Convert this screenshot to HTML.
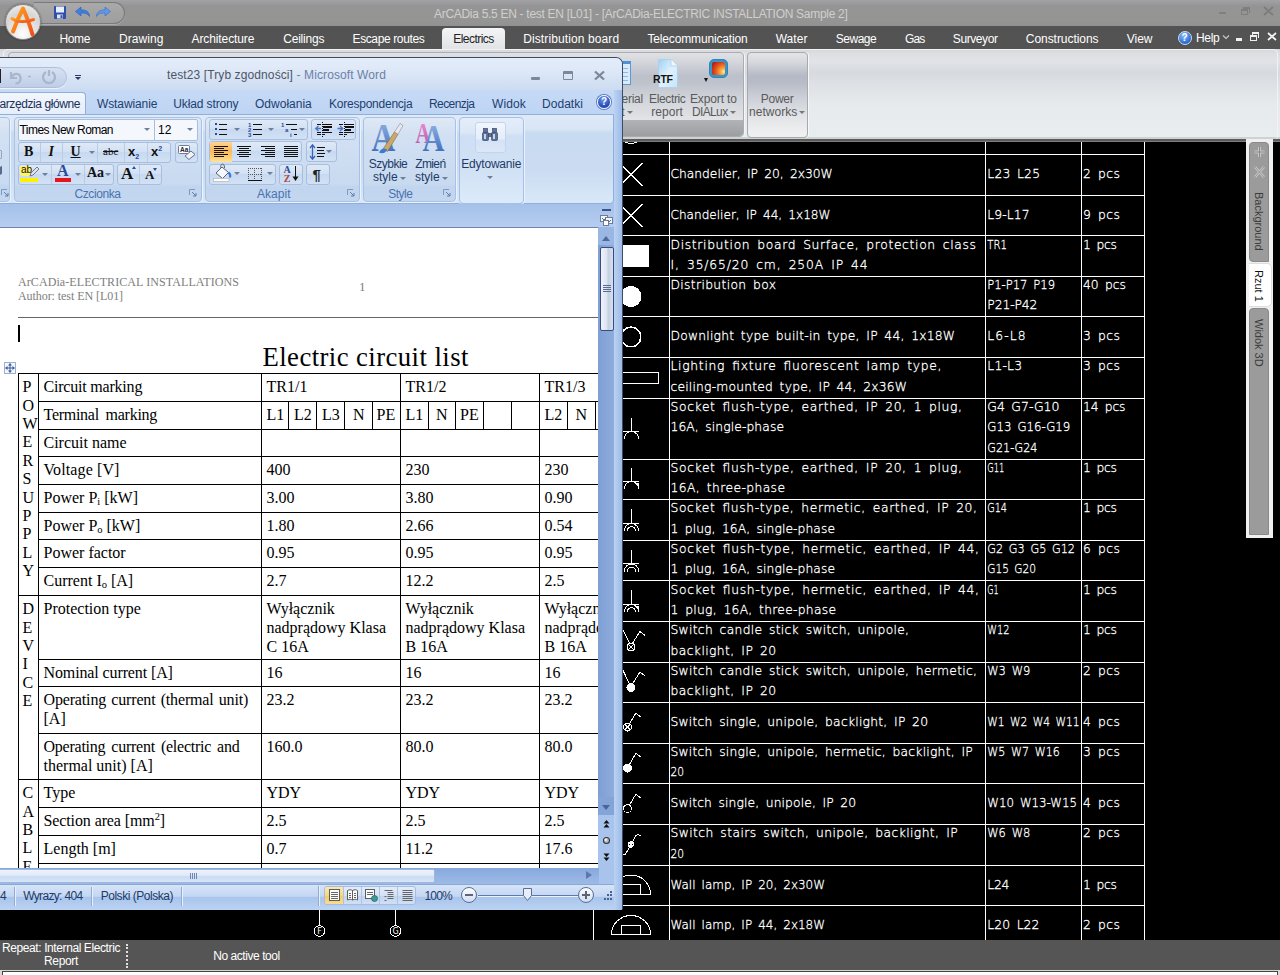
<!DOCTYPE html>
<html><head><meta charset="utf-8"><title>ArCADia</title>
<style>
*{box-sizing:border-box;margin:0;padding:0}
html,body{width:1280px;height:975px;overflow:hidden;background:#000}
body{position:relative;font-family:"Liberation Sans",sans-serif;font-size:12px}
.abs{position:absolute}
.t{position:absolute;white-space:nowrap}
/* ArCADia chrome */
#atitle{left:0;top:0;width:1280px;height:26px;background:linear-gradient(#a2a2a7 0,#9b9b9e 3px,#949494 6px,#959594 20px,#929292)}
#atitletxt{left:434px;top:7px;color:#cfcfcf;font-size:12px}
#qat{left:34px;top:2px;width:91px;height:22px;border-radius:0 11px 11px 0/0 11px 11px 0;background:linear-gradient(#a9a9a9,#9e9e9e);border:1px solid #7a7a7a;border-left:0;box-shadow:0 1px 0 #adadad}
#amenu{left:0;top:26px;width:1280px;height:23px;background:#535353}
#amenu .t{color:#fff;top:6px;font-size:12px}
#eltab{left:442px;top:2px;width:63px;height:22px;border-radius:4px 4px 0 0;background:linear-gradient(#f4f5f6,#dfe2e6)}
#helpico{left:1177.500px;top:5px;width:14px;height:14px;border-radius:50%;background:radial-gradient(circle at 40% 30%,#8cc0f8,#2a68d0 70%);border:1px solid #c8dcf4;color:#fff;font-size:10px;font-weight:bold;text-align:center;line-height:12px}
#aribbon{left:0;top:49px;width:1280px;height:93px;background:linear-gradient(#d4d6da 0,#dcdee2 4px,#e1e3e7 12px,#d6d9de 24px,#dde0e4 34px,#e6eaec 55px,#e8edef 88px,#cfd2d2 88px,#cfd2d2 90px,#565857 90px,#5f5f5f 92px,#7c7c7c 92px,#7c7c7c 93px)}
#rpanel{left:3px;top:0;width:1275px;height:90px;border:1px solid #f2f2f2;border-radius:5px 5px 3px 3px;border-bottom:0}
#grp1{left:8px;top:3px;width:736px;height:85px;border-radius:4px;border:1px solid #a9acb1;background:linear-gradient(#dfe1e5 0,#d4d6db 9px,#bcc0ca 23px,#bfc3cc 30px,#d0d3d9 45px,#dfe1e4 64px,#e4e6e8 70px);box-shadow:1px 0 0 #f4f4f4}
#grp1lab{left:0;bottom:0;width:100%;height:16px;background:linear-gradient(#b1b3b6,#9c9ea1);border-radius:0 0 4px 4px}
#grp2{left:747px;top:3px;width:61px;height:86px;border-radius:4px;border:1px solid #a6a9ae;background:linear-gradient(#e3e5e8 0,#d6d8dd 9px,#b5b9c5 23px,#b8bcc7 30px,#cdd0d8 45px,#e2e4e7 64px,#eef0f0 80px);box-shadow:1px 0 0 #f8f8f8}
.rl{color:#5a5a5a;font-size:12px}
#appbtn{left:5px;top:4px;width:36px;height:36px;border-radius:50%;background:radial-gradient(circle at 50% 85%,#fff 0,#e9e9e9 30%,#d6d6d6 60%,#f4f4f4 100%);border:1px solid #8a8a8a;box-shadow:0 0 2px rgba(0,0,0,.5)}
#astatus{left:0;top:940px;width:1280px;height:30px;background:#555}
#abottom{left:0;top:970px;width:1280px;height:5px;background:#d8d8d8}
/* right side panel */
#side{left:1246px;top:139px;width:27px;height:399px;background:#f0f0f0}
#side .tab{position:absolute;left:3px;width:20px;background:#9b9b9b;border:1px solid #8a8a8a}
#side .vt{position:absolute;white-space:nowrap;transform-origin:0 0;transform:rotate(90deg);font-size:11px;color:#333}
/* Word window */
#word{left:-20px;top:57px;width:643px;height:853px;background:#aac6ee;border:1px solid #3d4b66;border-bottom:0;border-radius:0 7px 2px 0;overflow:hidden}
#wi{left:19px;top:-58px;width:640px;height:975px}
#wtitle{left:-20px;top:58px;width:642px;height:32px;background:linear-gradient(#e4edfa,#dbe6f6 50%,#cddcf1)}
#wtitletxt{left:167px;top:68px;font-size:12px;color:#6b80a8}
#wqat{left:-20px;top:67px;width:87px;height:21px;border-radius:0 11px 11px 0;background:linear-gradient(#d6e1f2,#bfcee8);border:1px solid #aebfdc;box-shadow:0 1px 0 #eef3fb}
#wtabs{left:-20px;top:90px;width:642px;height:25px;background:linear-gradient(#c6daf6,#bdd4f3)}
#wtabs .t{top:8px;color:#1e3a68;font-size:12px}
#wtabact{left:-10px;top:92px;width:96px;height:24px;border:1px solid #8fb0dd;border-bottom:0;border-radius:4px 4px 0 0;background:linear-gradient(#f2f6fd,#e4edf9)}
#wrib{left:-20px;top:114px;width:634px;height:90px;border:1px solid #8fb0dd;border-radius:0 0 4px 4px;background:linear-gradient(#dfe9f7 0,#d8e5f5 14px,#c9dbf1 18px,#cbdcf2 55px,#d9e8f8 100%)}
.grp{position:absolute;top:117px;height:85px;border:1px solid #a9c1e2;border-radius:4px;background:linear-gradient(#dfe9f6,#d2e0f3 18px,#c8daf0 66px,#c1d5ee 69px,#c4d7f0);box-shadow:1px 0 0 #ecf2fb,0 1px 0 #ecf2fb}
.glab{position:absolute;top:187px;font-size:12px;color:#4a72b0;white-space:nowrap}
.bx{position:absolute;height:21px;border:1px solid #a8bedd;border-radius:3px;background:linear-gradient(#dfe9f7,#d3e1f4 45%,#c7d9f1 50%,#d2e1f5)}
.dd{position:absolute;width:0;height:0;border:3px solid transparent;border-top:3.500px solid #6d7f99;border-bottom:0}
.ln{position:absolute;background:#000;height:2px}
#wbelow{left:-20px;top:204px;width:642px;height:23px;background:linear-gradient(#a6c1ea,#b4cdf0)}
#docpage{left:0;top:227px;width:598px;height:641px;background:#fff;border-top:1px solid #6f82a8}
.hd{font-family:"Liberation Serif",serif;font-size:12px;color:#7e7e7e}
#doctitle{left:262.500px;top:342px;font-family:"Liberation Serif",serif;font-size:26.700px;color:#000;line-height:30px}
.dt{font-family:"Liberation Serif",serif;font-size:16px;line-height:18.700px;color:#000}
.dt sub{font-size:10.500px;vertical-align:baseline;position:relative;top:2px;line-height:0}
.dt sup{font-size:10.500px;vertical-align:baseline;position:relative;top:-6px;line-height:0}
#vsb{left:598px;top:227px;width:16px;height:641px;background:linear-gradient(90deg,#7f9fd3,#86a6d9 50%,#8eacdc)}
#hsb{left:-20px;top:868px;width:619px;height:16px;background:linear-gradient(#86a7dc,#93b2e2 50%,#9dbae6)}
#wstat{left:-20px;top:884px;width:642px;height:26px;background:linear-gradient(#d6e4f7 0,#c3d7f3 45%,#a9c5ec 50%,#bcd3f2 100%);border-top:1px solid #8ba9d6}
#wstat .t{top:5px;color:#1f3a68;font-size:12px}
#wframe{left:614px;top:90px;width:8px;height:820px;background:linear-gradient(90deg,#bcd2f2,#a9c4ec 60%,#9dbbe6)}
.rb{font-size:12px;color:#1e3a68}
.wt{color:#21406f}
.ws{color:#1f3a68;font-size:12px}
</style></head><body>
<svg class="abs" id="cadsvg" style="left:0;top:141px" width="1280" height="799" viewBox="0 141 1280 799">
<g fill="#fff" shape-rendering="crispEdges">
<rect x="593" y="141" width="1" height="799"/>
<rect x="669" y="141" width="1" height="799"/>
<rect x="985" y="141" width="1" height="799"/>
<rect x="1081" y="141" width="1" height="799"/>
<rect x="1144" y="141" width="1" height="799"/>
<rect x="593" y="154" width="552" height="1"/>
<rect x="593" y="195" width="552" height="1"/>
<rect x="593" y="235" width="552" height="1"/>
<rect x="593" y="276" width="552" height="1"/>
<rect x="593" y="316" width="552" height="1"/>
<rect x="593" y="357" width="552" height="1"/>
<rect x="593" y="398" width="552" height="1"/>
<rect x="593" y="459" width="552" height="1"/>
<rect x="593" y="499" width="552" height="1"/>
<rect x="593" y="540" width="552" height="1"/>
<rect x="593" y="580" width="552" height="1"/>
<rect x="593" y="621" width="552" height="1"/>
<rect x="593" y="662" width="552" height="1"/>
<rect x="593" y="702" width="552" height="1"/>
<rect x="593" y="743" width="552" height="1"/>
<rect x="593" y="783" width="552" height="1"/>
<rect x="593" y="824" width="552" height="1"/>
<rect x="593" y="865" width="552" height="1"/>
<rect x="593" y="905" width="552" height="1"/>
</g>
<g fill="#fff" stroke="#fff" stroke-width=".3" font-family="'DejaVu Sans Light','DejaVu Sans',sans-serif" font-weight="200" font-size="12.3" style="white-space:pre;word-spacing:2.4px">
<text x="670.5" y="178.0" textLength="162.2" lengthAdjust="spacing">Chandelier, IP 20, 2x30W</text>
<text x="987.3" y="178.0" textLength="52.7" lengthAdjust="spacing">L23 L25</text>
<text x="1083" y="178.0" textLength="37.0" lengthAdjust="spacing">2 pcs</text>
<text x="670.5" y="218.6" textLength="160.0" lengthAdjust="spacingAndGlyphs">Chandelier, IP 44, 1x18W</text>
<text x="987.3" y="218.6" textLength="42.2" lengthAdjust="spacing">L9-L17</text>
<text x="1083" y="218.6" textLength="37.0" lengthAdjust="spacing">9 pcs</text>
<text x="670.5" y="248.5" textLength="305.5" lengthAdjust="spacing">Distribution board Surface, protection class</text>
<text x="670.5" y="268.8" textLength="197.1" lengthAdjust="spacing">I, 35/65/20 cm, 250A IP 44</text>
<text x="987.3" y="248.5" textLength="19.7" lengthAdjust="spacingAndGlyphs">TR1</text>
<text x="1083" y="248.5" textLength="34.0" lengthAdjust="spacing">1 pcs</text>
<text x="670.5" y="289.1" textLength="105.5" lengthAdjust="spacing">Distribution box</text>
<text x="987.3" y="289.1" textLength="67.7" lengthAdjust="spacingAndGlyphs">P1-P17 P19</text>
<text x="987.3" y="309.4" textLength="50.1" lengthAdjust="spacing">P21-P42</text>
<text x="1083" y="289.1" textLength="43.0" lengthAdjust="spacing">40 pcs</text>
<text x="670.5" y="340.4" textLength="284.5" lengthAdjust="spacing">Downlight type built-in type, IP 44, 1x18W</text>
<text x="987.3" y="340.4" textLength="38.3" lengthAdjust="spacing">L6-L8</text>
<text x="1083" y="340.4" textLength="37.0" lengthAdjust="spacing">3 pcs</text>
<text x="670.5" y="370.3" textLength="271.0" lengthAdjust="spacing">Lighting fixture fluorescent lamp type,</text>
<text x="670.5" y="390.6" textLength="236.5" lengthAdjust="spacing">ceiling-mounted type, IP 44, 2x36W</text>
<text x="987.3" y="370.3" textLength="34.7" lengthAdjust="spacing">L1-L3</text>
<text x="1083" y="370.3" textLength="37.0" lengthAdjust="spacing">3 pcs</text>
<text x="670.5" y="410.9" textLength="291.5" lengthAdjust="spacing">Socket flush-type, earthed, IP 20, 1 plug,</text>
<text x="670.5" y="431.2" textLength="113.5" lengthAdjust="spacing">16A, single-phase</text>
<text x="987.3" y="410.9" textLength="72.2" lengthAdjust="spacingAndGlyphs">G4  G7-G10</text>
<text x="987.3" y="431.2" textLength="83.0" lengthAdjust="spacingAndGlyphs">G13  G16-G19</text>
<text x="987.3" y="451.5" textLength="50.1" lengthAdjust="spacingAndGlyphs">G21-G24</text>
<text x="1083" y="410.9" textLength="42.5" lengthAdjust="spacing">14 pcs</text>
<text x="670.5" y="471.8" textLength="291.5" lengthAdjust="spacing">Socket flush-type, earthed, IP 20, 1 plug,</text>
<text x="670.5" y="492.1" textLength="114.5" lengthAdjust="spacing">16A, three-phase</text>
<text x="987.3" y="471.8" textLength="17.1" lengthAdjust="spacingAndGlyphs">G11</text>
<text x="1083" y="471.8" textLength="34.0" lengthAdjust="spacing">1 pcs</text>
<text x="670.5" y="512.4" textLength="306.5" lengthAdjust="spacing">Socket flush-type, hermetic, earthed, IP 20,</text>
<text x="670.5" y="532.7" textLength="164.5" lengthAdjust="spacing">1 plug, 16A, single-phase</text>
<text x="987.3" y="512.4" textLength="19.7" lengthAdjust="spacingAndGlyphs">G14</text>
<text x="1083" y="512.4" textLength="34.0" lengthAdjust="spacing">1 pcs</text>
<text x="670.5" y="553.0" textLength="308.5" lengthAdjust="spacing">Socket flush-type, hermetic, earthed, IP 44,</text>
<text x="670.5" y="573.3" textLength="164.5" lengthAdjust="spacing">1 plug, 16A, single-phase</text>
<text x="987.3" y="553.0" textLength="87.7" lengthAdjust="spacingAndGlyphs">G2 G3 G5 G12</text>
<text x="987.3" y="573.3" textLength="48.7" lengthAdjust="spacingAndGlyphs">G15 G20</text>
<text x="1083" y="553.0" textLength="37.0" lengthAdjust="spacing">6 pcs</text>
<text x="670.5" y="593.6" textLength="308.5" lengthAdjust="spacing">Socket flush-type, hermetic, earthed, IP 44,</text>
<text x="670.5" y="613.9" textLength="165.5" lengthAdjust="spacing">1 plug, 16A, three-phase</text>
<text x="987.3" y="593.6" textLength="11.4" lengthAdjust="spacingAndGlyphs">G1</text>
<text x="1083" y="593.6" textLength="34.0" lengthAdjust="spacing">1 pcs</text>
<text x="670.5" y="634.2" textLength="238.5" lengthAdjust="spacing">Switch candle stick switch, unipole,</text>
<text x="670.5" y="654.5" textLength="105.5" lengthAdjust="spacing">backlight, IP 20</text>
<text x="987.3" y="634.2" textLength="22.2" lengthAdjust="spacingAndGlyphs">W12</text>
<text x="1083" y="634.2" textLength="34.0" lengthAdjust="spacing">1 pcs</text>
<text x="670.5" y="674.8" textLength="306.5" lengthAdjust="spacing">Switch candle stick switch, unipole, hermetic,</text>
<text x="670.5" y="695.1" textLength="105.5" lengthAdjust="spacing">backlight, IP 20</text>
<text x="987.3" y="674.8" textLength="43.1" lengthAdjust="spacingAndGlyphs">W3 W9</text>
<text x="1083" y="674.8" textLength="37.0" lengthAdjust="spacing">2 pcs</text>
<text x="670.5" y="726.1" textLength="257.5" lengthAdjust="spacing">Switch single, unipole, backlight, IP 20</text>
<text x="987.3" y="726.1" textLength="92.2" lengthAdjust="spacingAndGlyphs">W1 W2 W4 W11</text>
<text x="1083" y="726.1" textLength="37.0" lengthAdjust="spacing">4 pcs</text>
<text x="670.5" y="756.0" textLength="302.2" lengthAdjust="spacing">Switch single, unipole, hermetic, backlight, IP</text>
<text x="670.5" y="776.3" textLength="13.5" lengthAdjust="spacingAndGlyphs">20</text>
<text x="987.3" y="756.0" textLength="72.5" lengthAdjust="spacingAndGlyphs">W5 W7 W16</text>
<text x="1083" y="756.0" textLength="37.0" lengthAdjust="spacing">3 pcs</text>
<text x="670.5" y="807.3" textLength="185.5" lengthAdjust="spacing">Switch single, unipole, IP 20</text>
<text x="987.3" y="807.3" textLength="89.7" lengthAdjust="spacingAndGlyphs">W10  W13-W15</text>
<text x="1083" y="807.3" textLength="37.0" lengthAdjust="spacing">4 pcs</text>
<text x="670.5" y="837.2" textLength="287.1" lengthAdjust="spacing">Switch stairs switch, unipole, backlight, IP</text>
<text x="670.5" y="857.5" textLength="13.5" lengthAdjust="spacingAndGlyphs">20</text>
<text x="987.3" y="837.2" textLength="43.1" lengthAdjust="spacingAndGlyphs">W6 W8</text>
<text x="1083" y="837.2" textLength="37.0" lengthAdjust="spacing">2 pcs</text>
<text x="670.5" y="888.5" textLength="154.5" lengthAdjust="spacingAndGlyphs">Wall lamp, IP 20, 2x30W</text>
<text x="987.3" y="888.5" textLength="22.1" lengthAdjust="spacing">L24</text>
<text x="1083" y="888.5" textLength="34.0" lengthAdjust="spacing">1 pcs</text>
<text x="670.5" y="929.1" textLength="154.5" lengthAdjust="spacingAndGlyphs">Wall lamp, IP 44, 2x18W</text>
<text x="987.3" y="929.1" textLength="52.1" lengthAdjust="spacing">L20 L22</text>
<text x="1083" y="929.1" textLength="37.0" lengthAdjust="spacing">2 pcs</text>
</g>
<g stroke="#fff" stroke-width="1" fill="none" stroke-linecap="square" shape-rendering="crispEdges">
<!-- hidden row remnant -->
<path d="M624 141.5 q7 4 14 0"/>
<!-- chandeliers -->
<path d="M620 163.5 L642 185.5 M642 163.5 L620 185.5"/>
<path d="M620 204.5 L642 226.5 M642 204.5 L620 226.5"/>
<!-- distribution board / box -->
<rect x="612" y="245" width="37" height="22" fill="#fff" stroke="none"/>
<circle cx="631" cy="296.5" r="10.5" fill="#fff" stroke="none"/>
<circle cx="631" cy="337" r="9.8" stroke-width="1.6"/>
<rect x="604" y="372.5" width="54" height="11" shape-rendering="crispEdges"/>
<!-- sockets -->
<g id="sock1"><path d="M631.5 418 V431 M623.5 431.5 H638.5 M624.5 438.5 a7 7 0 0 1 14 0"/></g>
<g><path d="M631.5 468 V481 M623.5 481.5 H638.5 M624.5 488.5 a7 7 0 0 1 14 0 M636 483 l2.500 4 v-4z" /></g>
<g><path d="M631.5 509.500 V523 M623.500 523.500 H638.500 M624.500 530.500 a7 7 0 0 1 14 0 M627.500 530.500 a4 4 0 0 1 8 0"/></g>
<g><path d="M631.5 550 V563 M623.500 563.500 H638.500 M624.500 571 a7 7 0 0 1 14 0 M627.500 571 a4 4 0 0 1 8 0"/></g>
<g><path d="M631.5 590.500 V604 M623.500 604.500 H638.500 M624.500 611.500 a7 7 0 0 1 14 0 M627.500 611.500 a4 4 0 0 1 8 0 M636 606 l2.500 4 v-4z"/></g>
<!-- candle stick switches -->
<g><circle cx="631" cy="647" r="4"/><path d="M628.200 644.200 l5.600 5.600 M633.800 644.200 l-5.600 5.600 M629.500 643.300 L623 630 M632.500 643.300 L640 631.500 L644.500 635"/></g>
<g><circle cx="631" cy="687.500" r="4" fill="#fff"/><path d="M629.500 683.800 L623 670.500 M632.500 683.800 L640 672 L644.500 675.500"/></g>
<!-- single switches -->
<g><circle cx="627.500" cy="727" r="4"/><path d="M624.700 724.200 l5.600 5.600 M630.300 724.200 l-5.600 5.600 M629.500 723.500 L636 713 L640 716.500"/></g>
<g><circle cx="627.500" cy="768" r="4" fill="#fff"/><path d="M629.500 764.500 L636 753 L640 756.500"/></g>
<g><circle cx="627.500" cy="808.500" r="4"/><path d="M629.500 805 L636 794 L640 797.500"/></g>
<!-- stairs switch -->
<g><circle cx="631" cy="844.500" r="2.600"/><path d="M629.200 842.700 l3.600 3.600 M632.800 842.700 l-3.600 3.600 M623.300 854 l1.700 1 L636 835.500 L638 834.300 L640.300 835.800"/></g>
<!-- wall lamps -->
<path d="M611.500 894.500 a19.500 19.500 0 0 1 39 0 z M621.500 894.500 v-10 h19 v10"/>
<path d="M611.500 934.500 a19.500 19 0 0 1 39 0 z M621.500 934.500 v-9 h19 v9"/>
<!-- axis markers -->
<path d="M319.500 905 V925 M395.500 905 V925"/>
<circle cx="319.500" cy="931" r="5.300"/><circle cx="395.500" cy="931" r="5.300"/>
</g>
<g fill="#fff" font-family="'DejaVu Sans',sans-serif" font-size="8" text-anchor="middle"><text x="319.600" y="934">F</text><text x="395.500" y="934">G</text></g>
</svg>
<div class="abs" id="atitle">
 <div class="t" id="atitletxt" style="letter-spacing:-0.295px">ArCADia 5.5 EN - test EN [L01] - [ArCADia-ELECTRIC INSTALLATION Sample 2]</div>
 <div class="abs" id="qat"></div>
 <svg class="abs" style="left:52px;top:4px" width="64" height="18" viewBox="0 0 64 18">
  <rect x="2" y="2" width="12" height="13" rx="1" fill="#2f4fa8"/><rect x="4" y="2.500" width="8" height="6" fill="#e8eefc"/><rect x="5" y="10.500" width="6" height="4" fill="#dfe6f6"/><rect x="8.500" y="11.200" width="2" height="2.800" fill="#2f4fa8"/>
  <path d="M23.500 7.500 l5.500 -4.500 v3 c5 -0.500 8.500 2 8.500 6.500 c-1.500 -3 -4.500 -3.800 -8.500 -3.500 v3z" fill="#3f7fe0" stroke="#2a5cb8" stroke-width=".6"/>
  <path d="M58.500 7.500 l-5.500 -4.500 v3 c-5 -0.500 -8.500 2 -8.500 6.500 c1.500 -3 4.500 -3.800 8.500 -3.500 v3z" fill="#5f98e8" stroke="#3a6cc8" stroke-width=".6"/>
 </svg>
 <div class="abs" style="left:1219px;top:12px;width:7px;height:2px;background:#808080"></div>
 <div class="abs" style="left:1241px;top:9px;width:7px;height:6px;border:1px solid #7e7e7e;border-top-width:2px"></div>
 <div class="abs" style="left:1243px;top:7px;width:7px;height:6px;border:1px solid #7e7e7e;border-top-width:2px;border-left:0;border-bottom:0"></div>
 <div class="abs" style="left:1243px;top:7px;width:1px;height:2px;background:#7e7e7e"></div>
 <svg class="abs" style="left:1263px;top:6px" width="11" height="10" viewBox="0 0 11 10"><path d="M1 1 L10 9 M10 1 L1 9" stroke="#7c7c7c" stroke-width="1.800"/></svg>
</div>
<div class="abs" id="amenu">
 <div class="abs" id="eltab"></div>
 <div class="t" style="left:59.5px;letter-spacing:-0.379px">Home</div>
 <div class="t" style="left:119.0px;letter-spacing:0.069px">Drawing</div>
 <div class="t" style="left:191.5px;letter-spacing:-0.103px">Architecture</div>
 <div class="t" style="left:283.2px;letter-spacing:-0.198px">Ceilings</div>
 <div class="t" style="left:352.5px;letter-spacing:-0.378px">Escape routes</div>
 <div class="t" style="left:453.2px;color:#222;letter-spacing:-0.527px">Electrics</div>
 <div class="t" style="left:523.2px;letter-spacing:0.113px">Distribution board</div>
 <div class="t" style="left:647.5px;letter-spacing:-0.160px">Telecommunication</div>
 <div class="t" style="left:775.7px;letter-spacing:0.048px">Water</div>
 <div class="t" style="left:835.7px;letter-spacing:-0.462px">Sewage</div>
 <div class="t" style="left:905.0px;letter-spacing:-0.905px">Gas</div>
 <div class="t" style="left:952.8px;letter-spacing:-0.416px">Surveyor</div>
 <div class="t" style="left:1025.8px;letter-spacing:-0.052px">Constructions</div>
 <div class="t" style="left:1126.8px;letter-spacing:-0.024px">View</div>
 <div class="abs" id="helpico"><span>?</span></div>
 <div class="t" style="left:1196.0px;top:5px;letter-spacing:-0.297px">Help</div>
 <svg class="abs" style="left:1222px;top:8px" width="8" height="6" viewBox="0 0 8 6"><path d="M1 1.500 L4 4.500 L7 1.500" stroke="#ccc" stroke-width="1.100" fill="none"/></svg>
 <div class="abs" style="left:1236px;top:12px;width:6px;height:3px;background:#f0f0f0"></div>
 <div class="abs" style="left:1250px;top:9px;width:7px;height:6px;border:1px solid #f0f0f0;border-top-width:2px"></div>
 <div class="abs" style="left:1252px;top:6px;width:7px;height:6px;border:1px solid #f0f0f0;border-top-width:2px;border-left:0;border-bottom:0"></div>
 <div class="abs" style="left:1252px;top:6px;width:1px;height:3px;background:#f0f0f0"></div>
 <svg class="abs" style="left:1267px;top:6px" width="10" height="9" viewBox="0 0 10 9"><path d="M1 1 L9 8 M9 1 L1 8" stroke="#f4f4f4" stroke-width="1.700"/></svg>
</div>
<div class="abs" id="aribbon">
 <div class="abs" id="rpanel"></div>
 <div class="abs" id="grp1"><div class="abs" id="grp1lab"></div></div>
 <div class="abs" id="grp2"></div>
 <!-- group 1 content -->
 <div class="abs" style="left:620px;top:12px;width:11px;height:24px;background:#d9eafa;border:1px solid #5a9ad8;border-top:3px solid #4d90d4"></div>
 <div class="abs" style="left:622px;top:19px;width:6px;height:1px;background:#8dbbe6;box-shadow:0 4px #8dbbe6,0 8px #8dbbe6,0 12px #8dbbe6"></div><div class="t rl" style="left:610px;top:56px">list</div>
 <div class="t rl" style="left:621.5px;top:43px;letter-spacing:-0.237px">erial</div>
 <div class="abs" style="left:627px;top:62px;width:0;height:0;border:3px solid transparent;border-top:3.500px solid #777;border-bottom:0"></div>
 <svg class="abs" style="left:652px;top:9px" width="28" height="32" viewBox="0 0 28 32"><defs><linearGradient id="pg" x1="0" y1="0" x2="1" y2="1"><stop offset="0" stop-color="#9fd0f4"/><stop offset=".5" stop-color="#dff0fc"/><stop offset="1" stop-color="#c8e4f8"/></linearGradient></defs><path d="M6.500 1.500 H19 L25.500 8 V29.500 H6.500z" fill="url(#pg)" stroke="#a8cfee" stroke-width=".8"/><path d="M19 1.500 V8 H25.500" fill="#eef7fe" stroke="#a8cfee" stroke-width=".8"/></svg>
 <div class="t" style="left:653px;top:24px;font-size:10.500px;font-weight:bold;color:#111;letter-spacing:-0.207px">RTF</div>
 <div class="t rl" style="left:649.0px;top:43px;letter-spacing:-0.355px">Electric</div>
 <div class="t rl" style="left:651.2px;top:56px;letter-spacing:0.073px">report</div>
 <div class="abs" style="left:709px;top:10px;width:19px;height:19px;border-radius:5px;background:#3a94c8;border:1px solid #2c86bc"></div>
 <div class="abs" style="left:712px;top:13px;width:13px;height:13px;border-radius:2px;background:radial-gradient(circle at 90% 75%,#ffe9a8 0,#f9a838 22%,#e8501c 55%,#8c1810 100%)"></div>
 <div class="abs" style="left:704px;top:29px;width:0;height:0;border:2.500px solid transparent;border-top:4px solid #111;border-bottom:0"></div>
 <div class="t rl" style="left:690.0px;top:43px;letter-spacing:-0.137px">Export to</div>
 <div class="t rl" style="left:692px;top:56px;letter-spacing:-0.643px">DIALux</div><div class="abs" style="left:730px;top:62px;width:0;height:0;border:3px solid transparent;border-top:3.500px solid #777;border-bottom:0"></div>
 <div class="t rl" style="left:760.8px;top:43px;letter-spacing:-0.263px">Power</div>
 <div class="t rl" style="left:749px;top:56px;letter-spacing:0.034px">networks</div><div class="abs" style="left:799px;top:62px;width:0;height:0;border:3px solid transparent;border-top:3.500px solid #777;border-bottom:0"></div>
</div>
<div class="abs" id="appbtn"><svg width="36" height="36" viewBox="0 0 36 36"><defs><linearGradient id="ag" x1="0" y1="0" x2="1" y2="1"><stop offset="0" stop-color="#ffa51e"/><stop offset="1" stop-color="#f0501a"/></linearGradient></defs>
<path d="M7 26.500 C10 18 13.500 10 17 3.500 C20.500 11 24 21 26.500 29.500" fill="none" stroke="url(#ag)" stroke-width="4" stroke-linecap="round" stroke-linejoin="round"/><path d="M6 13.500 C12 17.500 20 17 27.500 14.500" fill="none" stroke="url(#ag)" stroke-width="3" stroke-linecap="round"/></svg></div>
<div class="abs" id="astatus">
 <div class="t" style="left:2.0px;top:1px;color:#fff;letter-spacing:-0.403px">Repeat: Internal Electric</div>
 <div class="t" style="left:44.0px;top:14px;color:#fff;letter-spacing:-0.339px">Report</div>
 <div class="abs" style="left:126px;top:4px;width:0;height:24px;border-left:2px dotted #e0e0e0"></div>
 <div class="t" style="left:213.2px;top:9px;color:#fff;letter-spacing:-0.436px">No active tool</div>
</div>
<div class="abs" id="abottom"><div class="abs" style="left:2px;top:1px;width:1276px;height:4px;background:#fff;border:1px solid #444;border-bottom:0"></div></div>
<div class="abs" id="side">
 <div class="tab" style="top:3px;height:120px;border-radius:4px 4px 0 4px"></div>
 <div class="tab" style="top:169px;height:227px;border-radius:4px 4px 0 0"></div>
 <div class="abs" style="left:3px;top:124px;width:23px;height:44px;background:#fff;border-radius:0 5px 5px 0;border:1px solid #ddd;border-left:0"></div>
 <svg class="abs" style="left:7px;top:7px" width="13" height="42" viewBox="0 0 13 42"><path d="M6.500 1 V11 M1.500 6 H11.500" stroke="#c9c9c9" stroke-width="3"/><path d="M6.500 1 V11 M1.500 6 H11.500" stroke="#888" stroke-width="1"/><path d="M2 21 L11 31 M11 21 L2 31" stroke="#c9c9c9" stroke-width="2.600"/><path d="M2 21 L11 31 M11 21 L2 31" stroke="#888" stroke-width=".8"/></svg>
 <div class="vt" style="left:19px;top:53px;color:#3c3c3c">Background</div>
 <div class="vt" style="left:19px;top:131px;color:#111">Rzut 1</div>
 <div class="vt" style="left:19px;top:180px;color:#3c3c3c">Widok 3D</div>
</div>
<div class="abs" id="word"><div class="abs" id="wi">
<div class="abs" id="wtitle"></div>
<div class="abs" id="wqat"></div>
<div class="abs" style="left:0;top:69px;width:1px;height:14px;background:#222"></div>
<svg class="abs" style="left:8px;top:68px" width="50" height="18" viewBox="0 0 50 18"><path d="M3 4 v6 h6 M3.500 9.500 c2 -5 9 -5 9 1 c0 3 -2 5 -5 5" fill="none" stroke="#a9b6cb" stroke-width="2.200"/><path d="M20 8.500 h3" stroke="#a9b6cb" stroke-width="1.500"/><path d="M38 4 a6 6 0 1 0 6 0 M41 2 v6" fill="none" stroke="#a9b6cb" stroke-width="2.300"/></svg>
<div class="abs" style="left:75px;top:75px;width:6px;height:1px;background:#2b3d63"></div>
<div class="dd" style="left:75px;top:77px;border-top-color:#2b3d63"></div>
<div class="t" id="wtitletxt" style="letter-spacing:0.106px"><span style="color:#4e5666">test23 [Tryb zgodności]</span> - Microsoft Word</div>
<div class="abs" style="left:531px;top:77px;width:9px;height:3px;background:#7c8798;border-radius:1px"></div>
<div class="abs" style="left:563px;top:71px;width:10px;height:9px;border:1.500px solid #7c8798;border-top-width:3px;border-radius:1px"></div>
<svg class="abs" style="left:593px;top:70px" width="13" height="11" viewBox="0 0 13 11"><path d="M2 1.500 L11 9.500 M11 1.500 L2 9.500" stroke="#7c8798" stroke-width="2.300"/></svg>
<div class="abs" id="wtabs"></div>
<div class="abs" id="wtabact"></div>
<div class="t wt" style="left:-9.5px;top:97px;color:#1a2f58;font-size:12px">N</div><div class="t wt" style="left:-0.5px;top:97px;color:#1a2f58;font-size:12px;letter-spacing:-0.415px">arzędzia główne</div>
<div class="t wt" style="left:97.0px;top:97px;letter-spacing:-0.106px">Wstawianie</div>
<div class="t wt" style="left:173.3px;top:97px;letter-spacing:-0.125px">Układ strony</div>
<div class="t wt" style="left:255.0px;top:97px;letter-spacing:0.011px">Odwołania</div>
<div class="t wt" style="left:329.0px;top:97px;letter-spacing:-0.231px">Korespondencja</div>
<div class="t wt" style="left:429.0px;top:97px;letter-spacing:-0.591px">Recenzja</div>
<div class="t wt" style="left:492.0px;top:97px;letter-spacing:0.131px">Widok</div>
<div class="t wt" style="left:542.0px;top:97px;letter-spacing:0.045px">Dodatki</div>
<div class="abs" style="left:597px;top:95px;width:14px;height:14px;border-radius:50%;background:radial-gradient(circle at 45% 30%,#6f9cf0,#1c3fae 75%);border:1px solid #eef3fc;box-shadow:0 0 0 1px #5c7ec0;color:#fff;font-weight:bold;font-size:10px;line-height:12px;text-align:center">?</div>
<div class="abs" id="wrib"></div>
<!-- groups -->
<div class="grp" style="left:-20px;width:30px"></div>
<div class="grp" style="left:14px;width:188px"></div>
<div class="grp" style="left:205px;width:155px"></div>
<div class="grp" style="left:363px;width:93px"></div>
<div class="grp" style="left:459px;width:65px;height:87px;background:linear-gradient(#e4edfa 0,#dde8f7 14px,#cfdff3 18px,#d2e2f5 55px,#dcebfa 100%);border-color:#a4c0e8"></div>
<div class="glab" style="left:74.5px;letter-spacing:-0.420px">Czcionka</div>
<div class="glab" style="left:257px;letter-spacing:0.023px">Akapit</div>
<div class="glab" style="left:388.3px;letter-spacing:-0.537px">Style</div>
<!-- dialog launchers -->
<svg class="abs" style="left:1px;top:189px" width="8" height="8" viewBox="0 0 8 8"><path d="M.500 6 V.500 H6" fill="none" stroke="#7f98bf"/><path d="M3 3 l4 4 M7 4 v3 h-3" fill="none" stroke="#5f7ba8"/></svg>
<svg class="abs" style="left:189px;top:189px" width="8" height="8" viewBox="0 0 8 8"><path d="M.500 6 V.500 H6" fill="none" stroke="#7f98bf"/><path d="M3 3 l4 4 M7 4 v3 h-3" fill="none" stroke="#5f7ba8"/></svg>
<svg class="abs" style="left:347px;top:189px" width="8" height="8" viewBox="0 0 8 8"><path d="M.500 6 V.500 H6" fill="none" stroke="#7f98bf"/><path d="M3 3 l4 4 M7 4 v3 h-3" fill="none" stroke="#5f7ba8"/></svg>
<svg class="abs" style="left:443px;top:189px" width="8" height="8" viewBox="0 0 8 8"><path d="M.500 6 V.500 H6" fill="none" stroke="#7f98bf"/><path d="M3 3 l4 4 M7 4 v3 h-3" fill="none" stroke="#5f7ba8"/></svg>
<div class="abs" style="left:-3px;top:150px;width:5px;height:9px;border:1px solid #9aa6ba;border-radius:1px"></div><div class="abs" style="left:-2px;top:167px;width:4px;height:8px;background:#5a6a8c;transform:skewY(-30deg)"></div>
<!-- Czcionka -->
<div class="bx" style="left:18px;top:119px;width:137px;height:22px;background:#f4f8fd;border-radius:2px 0 0 2px"></div>
<div class="bx" style="left:154px;top:119px;width:44px;height:22px;background:#f4f8fd;border-radius:0 2px 2px 0"></div>
<div class="t" style="left:19.5px;top:123px;font-size:12px;color:#000;letter-spacing:-0.539px">Times New Roman</div>
<div class="t" style="left:158px;top:123px;font-size:12px;color:#000">12</div>
<div class="dd" style="left:144px;top:128px"></div><div class="dd" style="left:187px;top:128px"></div>
<div class="bx" style="left:18px;top:142px;width:153px"></div>
<div class="bx" style="left:175px;top:142px;width:23px"></div>
<div class="abs" style="left:40px;top:143px;width:1px;height:19px;background:#b9cce6;box-shadow:22px 0 #b9cce6,57px 0 #b9cce6,84px 0 #b9cce6,107px 0 #b9cce6"></div>
<div class="t" style="left:24px;top:144px;font:bold 14px 'Liberation Serif',serif;color:#111">B</div>
<div class="t" style="left:48.500px;top:144px;font:italic bold 14px 'Liberation Serif',serif;color:#111">I</div>
<div class="t" style="left:70.500px;top:143.500px;font:bold 14px 'Liberation Serif',serif;color:#111;text-decoration:underline">U</div>
<div class="dd" style="left:89px;top:151px"></div>
<div class="t" style="left:103px;top:145px;font:11px 'Liberation Serif',serif;color:#111;text-decoration:line-through">abc</div>
<div class="t" style="left:128px;top:144px;font:bold 13px 'Liberation Sans',sans-serif;color:#111">x<span style="font-size:7px;color:#2a4a9a;position:relative;top:3px">2</span></div>
<div class="t" style="left:151px;top:144px;font:bold 13px 'Liberation Sans',sans-serif;color:#111">x<span style="font-size:7px;color:#2a4a9a;position:relative;top:-5px">2</span></div>
<svg class="abs" style="left:177px;top:144px" width="20" height="17" viewBox="0 0 20 17"><rect x="1.500" y="1.500" width="11" height="8" rx="1" fill="#fff" stroke="#6a7c98"/><text x="3" y="8" font-family="Liberation Sans,sans-serif" font-size="6.500" font-weight="bold" fill="#223">Aa</text><path d="M8 12 l6 -5 l4 3.500 l-6 5z" fill="#f2f2f6" stroke="#6a7088"/></svg>
<div class="bx" style="left:18px;top:164px;width:96px"></div>
<div class="bx" style="left:117px;top:164px;width:45px"></div>
<div class="abs" style="left:51px;top:165px;width:1px;height:19px;background:#b9cce6;box-shadow:33px 0 #b9cce6,88px 0 #b9cce6"></div>
<div class="abs" style="left:20px;top:166px;width:11px;height:10px;background:#fff36a;border-radius:2px"></div><div class="t" style="left:21px;top:164px;font:10px 'Liberation Sans',sans-serif;color:#111">ab</div>
<svg class="abs" style="left:28px;top:166px" width="12" height="12" viewBox="0 0 12 12"><path d="M2 10 l1 -3 l6 -6 l2 2 l-6 6z" fill="#dfe4ee" stroke="#55617a" stroke-width=".8"/></svg>
<div class="abs" style="left:20px;top:178px;width:18px;height:4px;background:#fff000"></div>
<div class="dd" style="left:42px;top:173px"></div>
<div class="t" style="left:57px;top:162px;font:bold 16px 'Liberation Serif',serif;color:#2a4a9a">A</div>
<div class="abs" style="left:55px;top:178px;width:16px;height:4px;background:#e8141c"></div>
<div class="dd" style="left:75px;top:173px"></div>
<div class="t" style="left:87px;top:165px;font:bold 14px 'Liberation Serif',serif;color:#111">Aa</div>
<div class="dd" style="left:105px;top:173px"></div>
<div class="t" style="left:121px;top:164px;font:bold 17px 'Liberation Serif',serif;color:#111">A</div>
<div class="t" style="left:145px;top:167px;font:bold 13px 'Liberation Serif',serif;color:#111">A</div>
<div class="abs" style="left:132px;top:166px;width:0;height:0;border:2.500px solid transparent;border-bottom:3px solid #2a4a9a;border-top:0"></div>
<div class="abs" style="left:153px;top:168px;width:0;height:0;border:2.500px solid transparent;border-top:3px solid #2a4a9a;border-bottom:0"></div>
<!-- Akapit -->
<div class="bx" style="left:209px;top:119px;width:99px"></div>
<div class="bx" style="left:311px;top:119px;width:45px"></div>
<div class="bx" style="left:209px;top:141px;width:93px"></div>
<div class="bx" style="left:306px;top:141px;width:31px"></div>
<div class="bx" style="left:209px;top:164px;width:67px"></div>
<div class="bx" style="left:279px;top:164px;width:24px"></div>
<div class="bx" style="left:306px;top:164px;width:24px"></div>
<div class="abs" style="left:210px;top:142px;width:22px;height:20px;background:linear-gradient(#fdd594,#fbb85a 45%,#fdd078 80%,#fde39a);border-radius:2px 0 0 2px"></div>
<svg class="abs" style="left:205px;top:115px" width="160" height="75" viewBox="205 115 160 75" shape-rendering="crispEdges"><g fill="#111"><rect x="219" y="124" width="8" height="1"/><rect x="219" y="129" width="8" height="1"/><rect x="219" y="134" width="8" height="1"/><rect x="253" y="124" width="9" height="1"/><rect x="253" y="129" width="9" height="1"/><rect x="253" y="134" width="9" height="1"/><rect x="286" y="124" width="11" height="1"/><rect x="291" y="129" width="6" height="1"/><rect x="294" y="134" width="3" height="1"/><rect x="214" y="146" width="14" height="1"/><rect x="237" y="146" width="14" height="1"/><rect x="261" y="146" width="14" height="1"/><rect x="284" y="146" width="14" height="1"/><rect x="214" y="148" width="10" height="1"/><rect x="239" y="148" width="10" height="1"/><rect x="265" y="148" width="10" height="1"/><rect x="284" y="148" width="14" height="1"/><rect x="214" y="150" width="14" height="1"/><rect x="237" y="150" width="14" height="1"/><rect x="261" y="150" width="14" height="1"/><rect x="284" y="150" width="14" height="1"/><rect x="214" y="152" width="10" height="1"/><rect x="239" y="152" width="10" height="1"/><rect x="265" y="152" width="10" height="1"/><rect x="284" y="152" width="14" height="1"/><rect x="214" y="154" width="14" height="1"/><rect x="237" y="154" width="14" height="1"/><rect x="261" y="154" width="14" height="1"/><rect x="284" y="154" width="14" height="1"/><rect x="214" y="156" width="10" height="1"/><rect x="239" y="156" width="10" height="1"/><rect x="265" y="156" width="10" height="1"/><rect x="284" y="156" width="14" height="1"/><rect x="317" y="147" width="8" height="1"/><rect x="317" y="150" width="7" height="1"/><rect x="317" y="153" width="8" height="1"/><rect x="317" y="156" width="7" height="1"/><rect x="317" y="124" width="4" height="1"/><rect x="323" y="124" width="9" height="1"/><rect x="323" y="126" width="9" height="2"/><rect x="323" y="129" width="6" height="2"/><rect x="317" y="132" width="4" height="1"/><rect x="323" y="132" width="9" height="1"/><rect x="317" y="134" width="4" height="1"/><rect x="323" y="134" width="2" height="1"/><rect x="322" y="122" width="1" height="1"/><rect x="322" y="124" width="1" height="1"/><rect x="322" y="126" width="1" height="1"/><rect x="322" y="128" width="1" height="1"/><rect x="322" y="130" width="1" height="1"/><rect x="322" y="132" width="1" height="1"/><rect x="322" y="134" width="1" height="1"/><rect x="322" y="136" width="1" height="1"/><rect x="339" y="124" width="4" height="1"/><rect x="345" y="124" width="9" height="1"/><rect x="345" y="126" width="9" height="2"/><rect x="345" y="129" width="6" height="2"/><rect x="339" y="132" width="4" height="1"/><rect x="345" y="132" width="9" height="1"/><rect x="339" y="134" width="4" height="1"/><rect x="345" y="134" width="2" height="1"/><rect x="344" y="122" width="1" height="1"/><rect x="344" y="124" width="1" height="1"/><rect x="344" y="126" width="1" height="1"/><rect x="344" y="128" width="1" height="1"/><rect x="344" y="130" width="1" height="1"/><rect x="344" y="132" width="1" height="1"/><rect x="344" y="134" width="1" height="1"/><rect x="344" y="136" width="1" height="1"/><rect x="248" y="180" width="14" height="1"/><rect x="295" y="166" width="1" height="13"/></g><g fill="#555"><rect x="248" y="168" width="1" height="1"/><rect x="248" y="174" width="1" height="1"/><rect x="250" y="168" width="1" height="1"/><rect x="250" y="174" width="1" height="1"/><rect x="252" y="168" width="1" height="1"/><rect x="252" y="174" width="1" height="1"/><rect x="254" y="168" width="1" height="1"/><rect x="254" y="174" width="1" height="1"/><rect x="256" y="168" width="1" height="1"/><rect x="256" y="174" width="1" height="1"/><rect x="258" y="168" width="1" height="1"/><rect x="258" y="174" width="1" height="1"/><rect x="260" y="168" width="1" height="1"/><rect x="260" y="174" width="1" height="1"/><rect x="248" y="168" width="1" height="1"/><rect x="254" y="168" width="1" height="1"/><rect x="261" y="168" width="1" height="1"/><rect x="248" y="170" width="1" height="1"/><rect x="254" y="170" width="1" height="1"/><rect x="261" y="170" width="1" height="1"/><rect x="248" y="172" width="1" height="1"/><rect x="254" y="172" width="1" height="1"/><rect x="261" y="172" width="1" height="1"/><rect x="248" y="174" width="1" height="1"/><rect x="254" y="174" width="1" height="1"/><rect x="261" y="174" width="1" height="1"/><rect x="248" y="176" width="1" height="1"/><rect x="254" y="176" width="1" height="1"/><rect x="261" y="176" width="1" height="1"/><rect x="248" y="178" width="1" height="1"/><rect x="254" y="178" width="1" height="1"/><rect x="261" y="178" width="1" height="1"/></g><g fill="#2a4a9a"><rect x="215" y="123" width="2" height="2"/><rect x="215" y="128" width="2" height="2"/><rect x="215" y="133" width="2" height="2"/></g></svg><svg class="abs" style="left:205px;top:115px" width="160" height="75" viewBox="205 115 160 75"><g font-family="Liberation Sans,sans-serif" font-weight="bold" font-size="6" fill="#2a4a9a"><text x="248" y="127">1</text><text x="248" y="132">2</text><text x="248" y="137">3</text><text x="281" y="127">1</text><text x="285" y="132">a</text><text x="290" y="137">i</text></g><path d="M321 128.500 h-5 M318.500 126 l-2.800 2.500 l2.800 2.500" fill="none" stroke="#4a74c4" stroke-width="1.300"/><path d="M337.500 128.500 h5 M340 126 l2.800 2.500 l-2.800 2.500" fill="none" stroke="#4a74c4" stroke-width="1.300"/><path d="M312.500 145 v14 M310 148 l2.500 -3.200 l2.500 3.200 M310 156 l2.500 3.200 l2.500 -3.200" fill="none" stroke="#3a64b8" stroke-width="1.300"/><path d="M292.500 176.500 l3 4.500 l3 -4.500z" fill="#111"/><path d="M216 173 l6 -6 l6.500 5.500 l-6 6z" fill="#f6f8fb" stroke="#55617a"/><path d="M221 168 c-1.500 -5 4 -5.500 3.500 0" fill="none" stroke="#55617a"/><path d="M228.500 172.500 c2 1.500 2 3 1.500 5" stroke="#3a7ad8" stroke-width="2.200" fill="none"/><rect x="213.500" y="178.500" width="15.500" height="3" fill="#fff" stroke="#aaa" stroke-width=".6"/><text x="283.500" y="173" font-family="Liberation Serif,serif" font-weight="bold" font-size="10" fill="#2a4a9a">A</text><text x="283.800" y="181.500" font-family="Liberation Serif,serif" font-weight="bold" font-size="10" fill="#b0433a">Z</text><text x="312.500" y="180" font-family="Liberation Sans,sans-serif" font-weight="bold" font-size="15" fill="#222">¶</text></svg>
<div class="dd" style="left:234px;top:128px"></div><div class="dd" style="left:268px;top:128px"></div><div class="dd" style="left:298.500px;top:128px"></div>
<div class="dd" style="left:326px;top:150px"></div>
<div class="dd" style="left:234px;top:172px"></div><div class="dd" style="left:266.500px;top:172px"></div>
<!-- Style -->
<svg class="abs" style="left:365px;top:118px" width="90" height="38" viewBox="365 118 90 38">
<defs><linearGradient id="ab" x1="0" y1="0" x2="0" y2="1"><stop offset="0" stop-color="#9dbdea"/><stop offset="1" stop-color="#2f62b4"/></linearGradient><linearGradient id="ap" x1="0" y1="0" x2="0" y2="1"><stop offset="0" stop-color="#f39ad6"/><stop offset="1" stop-color="#b550a8"/></linearGradient></defs>
<text transform="translate(371.500,151) scale(.8,1)" font-family="Liberation Serif,serif" font-weight="bold" font-size="41" fill="url(#ab)">A</text>
<path d="M383 149 l11.500 -17 l3.500 2.300 l-10.500 17.200z" fill="#c9a86a" stroke="#8a6a3a" stroke-width=".6"/><path d="M394.500 132 l5.500 -8.500 l3 2 l-5 8.800z" fill="#e8e8ee" stroke="#8a8a92" stroke-width=".6"/><path d="M379 152.500 c2 -4 5 -5 8 -3 c-1 3 -4 5 -8 3z" fill="#3a7ad8"/>
<text transform="translate(415.500,143) scale(.72,1)" font-family="Liberation Serif,serif" font-weight="bold" font-size="29" fill="url(#ap)">A</text>
<text transform="translate(422.500,150.800) scale(.82,1)" font-family="Liberation Serif,serif" font-weight="bold" font-size="37" fill="url(#ab)">A</text>
</svg>
<div class="t rb" style="left:368.8px;top:157px;letter-spacing:-0.504px">Szybkie</div>
<div class="t rb" style="left:373px;top:170px">style</div><div class="dd" style="left:400px;top:177px"></div>
<div class="t rb" style="left:415.2px;top:157px;letter-spacing:-0.609px">Zmień</div>
<div class="t rb" style="left:415px;top:170px">style</div><div class="dd" style="left:442px;top:177px"></div>
<!-- Edytowanie -->
<div class="abs" style="left:475px;top:122px;width:31px;height:31px;border:1px solid #c3d5ee;border-radius:3px;background:linear-gradient(#f2f6fc,#e4edf9 55%,#d3e2f5 60%,#dce8f8)"></div>
<svg class="abs" style="left:481px;top:126px" width="18" height="16" viewBox="0 0 18 16"><g fill="#5d7096" stroke="#3b4b70" stroke-width=".7"><rect x="2.500" y="2.500" width="4" height="4"/><rect x="11.500" y="2.500" width="4" height="4"/><rect x="1.500" y="6.500" width="6" height="8" rx="1"/><rect x="10.500" y="6.500" width="6" height="8" rx="1"/><rect x="7.500" y="7.500" width="3" height="3"/></g><rect x="3" y="8" width="2" height="5" fill="#c8d4ea"/><rect x="12" y="8" width="2" height="5" fill="#c8d4ea"/></svg>
<div class="t rb" style="left:461.2px;top:157px;letter-spacing:-0.195px">Edytowanie</div><div class="dd" style="left:487px;top:176px"></div>

<div class="abs" id="wbelow"></div>
<div class="abs" style="left:602px;top:209px;width:9px;height:2px;background:#3c5288"></div>
<svg class="abs" style="left:600px;top:214px" width="13" height="13" viewBox="0 0 13 13"><rect x=".5" y="1.500" width="7" height="6" fill="#f4f6fa" stroke="#6d7c98"/><rect x="5.500" y="3.500" width="7" height="6" fill="#f4f6fa" stroke="#6d7c98"/><rect x="3.500" y="6.500" width="5" height="5" fill="#fff" stroke="#6d7c98"/><path d="M2 4 l2 2 l2 -2 M7 6 l2 2 l2 -2" stroke="#5a6a88" fill="none"/></svg>
<div class="abs" id="docpage"></div>
<div class="t hd" style="left:18px;top:275px;letter-spacing:0.086px">ArCADia-ELECTRICAL INSTALLATIONS</div>
<div class="t hd" style="left:18px;top:289px;letter-spacing:-0.062px">Author: test EN [L01]</div>
<div class="t hd" style="left:359px;top:278.500px;font-size:13px">1</div>
<div class="abs" style="left:18px;top:317px;width:580px;height:1px;background:#666"></div>
<div class="abs" style="left:18px;top:325px;width:2px;height:17px;background:#000"></div>
<div class="t" id="doctitle" style="letter-spacing:0.438px">Electric circuit list</div>
<svg class="abs" style="left:4px;top:362px" width="12" height="12" viewBox="0 0 12 12"><rect x=".5" y=".5" width="11" height="11" fill="#f4f7fc" stroke="#9ab0d0"/><path d="M6 2 V10 M2 6 H10" stroke="#3a5a9a" stroke-width="1"/><path d="M6 1 l2 2.500 h-4z M6 11 l2 -2.500 h-4z M1 6 l2.500 -2 v4z M11 6 l-2.500 -2 v4z" fill="#3a5a9a"/></svg>
<svg class="abs" style="left:0;top:0" width="599" height="868" viewBox="0 0 599 868" shape-rendering="crispEdges" fill="#000"><rect x="18" y="373" width="580" height="1"/><rect x="39" y="401" width="559" height="1"/><rect x="39" y="429" width="559" height="1"/><rect x="39" y="456" width="559" height="1"/><rect x="39" y="484" width="559" height="1"/><rect x="39" y="512" width="559" height="1"/><rect x="39" y="539" width="559" height="1"/><rect x="39" y="567" width="559" height="1"/><rect x="18" y="595" width="580" height="1"/><rect x="39" y="659" width="559" height="1"/><rect x="39" y="686" width="559" height="1"/><rect x="39" y="733" width="559" height="1"/><rect x="18" y="779" width="580" height="1"/><rect x="39" y="807" width="559" height="1"/><rect x="39" y="835" width="559" height="1"/><rect x="39" y="863" width="559" height="1"/><rect x="18" y="373" width="1" height="495"/><rect x="38" y="373" width="1" height="495"/><rect x="261" y="373" width="1" height="495"/><rect x="400" y="373" width="1" height="495"/><rect x="539" y="373" width="1" height="495"/><rect x="288" y="401" width="1" height="28"/><rect x="316" y="401" width="1" height="28"/><rect x="344" y="401" width="1" height="28"/><rect x="372" y="401" width="1" height="28"/><rect x="428" y="401" width="1" height="28"/><rect x="455" y="401" width="1" height="28"/><rect x="483" y="401" width="1" height="28"/><rect x="511" y="401" width="1" height="28"/><rect x="567" y="401" width="1" height="28"/><rect x="595" y="401" width="1" height="28"/></svg>
<div class="t dt" style="left:43.5px;top:378.2px"><span style="letter-spacing:-0.204px">Circuit marking</span></div>
<div class="t dt" style="left:43.5px;top:406.2px"><span style="word-spacing:3px;letter-spacing:-0.271px">Terminal marking</span></div>
<div class="t dt" style="left:43.5px;top:434.2px">Circuit name</div>
<div class="t dt" style="left:43.5px;top:461.2px"><span style="letter-spacing:0.109px">Voltage [V]</span></div>
<div class="t dt" style="left:43.5px;top:489.2px">Power P<sub>i</sub> [kW]</div>
<div class="t dt" style="left:43.5px;top:517.2px">Power P<sub>o</sub> [kW]</div>
<div class="t dt" style="left:43.5px;top:544.2px">Power factor</div>
<div class="t dt" style="left:43.5px;top:572.2px">Current I<sub>o</sub> [A]</div>
<div class="t dt" style="left:43.5px;top:600.2px">Protection type</div>
<div class="t dt" style="left:43.5px;top:664.2px"><span style="letter-spacing:-0.117px">Nominal current [A]</span></div>
<div class="t dt" style="left:43.5px;top:691.2px"><span style="word-spacing:1.3px;letter-spacing:-0.153px">Operating current (thermal unit)</span><br>[A]</div>
<div class="t dt" style="left:43.5px;top:738.2px"><span style="word-spacing:2.2px;letter-spacing:-0.238px">Operating current (electric and</span><br>thermal unit) [A]</div>
<div class="t dt" style="left:43.5px;top:784.2px">Type</div>
<div class="t dt" style="left:43.5px;top:812.2px"><span style="letter-spacing:-0.107px">Section area [mm<sup>2</sup>]</span></div>
<div class="t dt" style="left:43.5px;top:840.2px">Length [m]</div>
<div class="t dt" style="left:266.5px;top:378.2px">TR1/1</div>
<div class="t dt" style="left:405.5px;top:378.2px">TR1/2</div>
<div class="t dt" style="left:544.5px;top:378.2px">TR1/3</div>
<div class="t dt" style="left:266.5px;top:461.2px">400</div>
<div class="t dt" style="left:405.5px;top:461.2px">230</div>
<div class="t dt" style="left:544.5px;top:461.2px">230</div>
<div class="t dt" style="left:266.5px;top:489.2px">3.00</div>
<div class="t dt" style="left:405.5px;top:489.2px">3.80</div>
<div class="t dt" style="left:544.5px;top:489.2px">0.90</div>
<div class="t dt" style="left:266.5px;top:517.2px">1.80</div>
<div class="t dt" style="left:405.5px;top:517.2px">2.66</div>
<div class="t dt" style="left:544.5px;top:517.2px">0.54</div>
<div class="t dt" style="left:266.5px;top:544.2px">0.95</div>
<div class="t dt" style="left:405.5px;top:544.2px">0.95</div>
<div class="t dt" style="left:544.5px;top:544.2px">0.95</div>
<div class="t dt" style="left:266.5px;top:572.2px">2.7</div>
<div class="t dt" style="left:405.5px;top:572.2px">12.2</div>
<div class="t dt" style="left:544.5px;top:572.2px">2.5</div>
<div class="t dt" style="left:266.5px;top:600.2px">Wyłącznik<br>nadprądowy Klasa<br>C 16A</div>
<div class="t dt" style="left:405.5px;top:600.2px">Wyłącznik<br>nadprądowy Klasa<br>B 16A</div>
<div class="t dt" style="left:544.5px;top:600.2px">Wyłącznik<br>nadprądowy<br>B 16A</div>
<div class="t dt" style="left:266.5px;top:664.2px">16</div>
<div class="t dt" style="left:405.5px;top:664.2px">16</div>
<div class="t dt" style="left:544.5px;top:664.2px">16</div>
<div class="t dt" style="left:266.5px;top:691.2px">23.2</div>
<div class="t dt" style="left:405.5px;top:691.2px">23.2</div>
<div class="t dt" style="left:544.5px;top:691.2px">23.2</div>
<div class="t dt" style="left:266.5px;top:738.2px">160.0</div>
<div class="t dt" style="left:405.5px;top:738.2px">80.0</div>
<div class="t dt" style="left:544.5px;top:738.2px">80.0</div>
<div class="t dt" style="left:266.5px;top:784.2px">YDY</div>
<div class="t dt" style="left:405.5px;top:784.2px">YDY</div>
<div class="t dt" style="left:544.5px;top:784.2px">YDY</div>
<div class="t dt" style="left:266.5px;top:812.2px">2.5</div>
<div class="t dt" style="left:405.5px;top:812.2px">2.5</div>
<div class="t dt" style="left:544.5px;top:812.2px">2.5</div>
<div class="t dt" style="left:266.5px;top:840.2px">0.7</div>
<div class="t dt" style="left:405.5px;top:840.2px">11.2</div>
<div class="t dt" style="left:544.5px;top:840.2px">17.6</div>
<div class="t dt" style="left:266.5px;top:406.2px">L1</div>
<div class="t dt" style="left:294px;top:406.2px">L2</div>
<div class="t dt" style="left:322px;top:406.2px">L3</div>
<div class="t dt" style="left:353px;top:406.2px">N</div>
<div class="t dt" style="left:376.5px;top:406.2px">PE</div>
<div class="t dt" style="left:405.5px;top:406.2px">L1</div>
<div class="t dt" style="left:436px;top:406.2px">N</div>
<div class="t dt" style="left:460px;top:406.2px">PE</div>
<div class="t dt" style="left:544.5px;top:406.2px">L2</div>
<div class="t dt" style="left:575.5px;top:406.2px">N</div>
<div class="t dt" style="left:22.5px;top:378.2px">P</div>
<div class="t dt" style="left:22.5px;top:396.6px">O</div>
<div class="t dt" style="left:22.5px;top:415.0px">W</div>
<div class="t dt" style="left:22.5px;top:433.4px">E</div>
<div class="t dt" style="left:22.5px;top:451.8px">R</div>
<div class="t dt" style="left:22.5px;top:470.2px">S</div>
<div class="t dt" style="left:22.5px;top:488.6px">U</div>
<div class="t dt" style="left:22.5px;top:507.0px">P</div>
<div class="t dt" style="left:22.5px;top:525.4px">P</div>
<div class="t dt" style="left:22.5px;top:543.8px">L</div>
<div class="t dt" style="left:22.5px;top:562.2px">Y</div>
<div class="t dt" style="left:22.5px;top:600.2px">D</div>
<div class="t dt" style="left:22.5px;top:618.6px">E</div>
<div class="t dt" style="left:22.5px;top:637.0px">V</div>
<div class="t dt" style="left:22.5px;top:655.4px">I</div>
<div class="t dt" style="left:22.5px;top:673.8px">C</div>
<div class="t dt" style="left:22.5px;top:692.2px">E</div>
<div class="t dt" style="left:22.5px;top:784.2px">C</div>
<div class="t dt" style="left:22.5px;top:802.6px">A</div>
<div class="t dt" style="left:22.5px;top:821.0px">B</div>
<div class="t dt" style="left:22.5px;top:839.4px">L</div>
<div class="t dt" style="left:22.5px;top:857.8px">E</div>

<div class="abs" id="vsb"></div>
<div class="abs" style="left:598px;top:227px;width:16px;height:18px;background:#9ab6e3"></div>
<div class="abs" style="left:602px;top:236px;width:0;height:0;border:4.500px solid transparent;border-bottom:5px solid #4f69a0;border-top:0"></div>
<div class="abs" style="left:600px;top:247px;width:14px;height:84px;border:1px solid #3b4b7d;border-radius:2px;background:linear-gradient(90deg,#eef2f9,#dfe6f2 45%,#c3cfe3 60%,#d8e0ee)"></div>
<div class="abs" style="left:603px;top:285px;width:8px;height:1px;background:#5b6b93;box-shadow:0 2px #5b6b93,0 4px #5b6b93,0 6px #5b6b93"></div>
<div class="abs" style="left:598px;top:797px;width:16px;height:18px;background:#84a3d6"></div>
<div class="abs" style="left:602px;top:805px;width:0;height:0;border:4.500px solid transparent;border-top:5px solid #4a64a0;border-bottom:0"></div>
<div class="abs" style="left:598px;top:815px;width:16px;height:69px;background:#a9c4ec"></div>
<svg class="abs" style="left:600px;top:816px" width="13" height="50" viewBox="0 0 13 50"><path d="M3.500 7.500 l3 -3.500 l3 3.500z M3.500 11.500 l3 -3.500 l3 3.500z M3.500 37.500 l3 3.500 l3 -3.500z M3.500 41.500 l3 3.500 l3 -3.500z" fill="#111"/><circle cx="6.500" cy="24.500" r="3" fill="#b8bcc4" stroke="#333" stroke-width="1.100"/><circle cx="5.700" cy="23.700" r="1.200" fill="#f4f4f6"/></svg>
<!-- h scrollbar -->
<div class="abs" id="hsb"></div>
<div class="abs" style="left:-20px;top:869px;width:455px;height:14px;border:1px solid #9db7df;border-radius:2px;background:linear-gradient(#eef3fb,#dde8f7 50%,#c9daf2 55%,#d9e6f8)"></div>
<div class="abs" style="left:190px;top:873px;width:1px;height:6px;background:#6f86b4;box-shadow:2px 0 #6f86b4,4px 0 #6f86b4,6px 0 #6f86b4"></div>
<div class="abs" style="left:586px;top:871px;width:0;height:0;border:4.500px solid transparent;border-left:6px solid #5d77ad;border-right:0"></div>
<!-- status bar -->
<div class="abs" id="wstat"></div>
<div class="t ws" style="left:0;top:889px">4</div>
<div class="t ws" style="left:23.2px;top:889px;letter-spacing:-0.663px">Wyrazy: 404</div>
<div class="t ws" style="left:100.7px;top:889px;letter-spacing:-0.471px">Polski (Polska)</div>
<div class="abs" style="left:14px;top:887px;width:1px;height:19px;background:#8fabd6;box-shadow:1px 0 #e8f0fb"></div>
<div class="abs" style="left:91px;top:887px;width:1px;height:19px;background:#8fabd6;box-shadow:1px 0 #e8f0fb"></div>
<div class="abs" style="left:181px;top:887px;width:1px;height:19px;background:#8fabd6;box-shadow:1px 0 #e8f0fb"></div>
<div class="abs" style="left:318px;top:886px;width:1px;height:20px;background:#8fabd6;box-shadow:1px 0 #e8f0fb"></div>
<div class="abs" style="left:324px;top:886px;width:92px;height:19px;border:1px solid #a4bce0;border-radius:3px;background:linear-gradient(#e3ecf9,#d3e1f5 50%,#c2d5f0 55%,#d0dff4)"></div><div class="abs" style="left:343px;top:887px;width:1px;height:17px;background:#adc3e3;box-shadow:18px 0 #adc3e3,36px 0 #adc3e3,54px 0 #adc3e3"></div><div class="abs" style="left:325px;top:887px;width:18px;height:17px;border-radius:2px 0 0 2px;background:linear-gradient(#fbe7ae,#f7d67c 50%,#f5cc66 55%,#f8dc90)"></div>
<svg class="abs" style="left:325px;top:886px" width="92" height="19" viewBox="0 0 92 19"><g fill="#fbfbfb" stroke="#5c5c5c" stroke-width="1"><rect x="4.500" y="3.500" width="10" height="11"/><path d="M22.500 4.500 c2 -1 3.500 -1 5 0 v9.500 c-1.500 -1 -3 -1 -5 0z M27.500 4.500 c2 -1 3.500 -1 5 0 v9.500 c-1.500 -1 -3 -1 -5 0z"/><rect x="40.500" y="3.500" width="9" height="9"/></g><circle cx="49.500" cy="12.500" r="3" fill="#3a9a94" stroke="#2a6a70" stroke-width=".8"/><g stroke="#666" stroke-width="1"><path d="M6 6.500 h7 M6 8.500 h7 M6 10.500 h7 M6 12.500 h7"/><path d="M24 7.500 h2 M24 9.500 h2 M24 11.500 h2 M29 7.500 h2 M29 9.500 h2 M29 11.500 h2 M42 6.500 h6 M42 8.500 h6"/><path d="M59.500 4.500 h8 M62.500 6.500 h6 M62.500 8.500 h6 M59.500 10.500 h2 M62.500 10.500 h6 M62.500 12.500 h6 M59.500 14.500 h2" /><path d="M77.500 4.500 h10 M77.500 6.500 h10 M77.500 8.500 h10 M77.500 10.500 h10 M77.500 12.500 h10 M77.500 14.500 h10"/></g></svg>
<div class="t ws" style="left:424.5px;top:889px;letter-spacing:-0.801px">100%</div>
<div class="abs" style="left:461px;top:887px;width:16px;height:16px;border-radius:50%;border:1px solid #5a6e94;background:linear-gradient(#fff,#cfdcf0)"></div>
<div class="abs" style="left:465px;top:894px;width:8px;height:2px;background:#5c6478"></div>
<div class="abs" style="left:578px;top:887px;width:16px;height:16px;border-radius:50%;border:1px solid #5a6e94;background:linear-gradient(#fff,#cfdcf0)"></div>
<div class="abs" style="left:582px;top:894px;width:8px;height:2px;background:#5c6478"></div>
<div class="abs" style="left:585px;top:891px;width:2px;height:8px;background:#5c6478"></div>
<div class="abs" style="left:478px;top:895px;width:100px;height:1px;background:#5f7aa8;box-shadow:0 1px #eaf1fb"></div>
<svg class="abs" style="left:522px;top:887px" width="11" height="15" viewBox="0 0 11 15"><path d="M1.500 1.500 h8 v7 l-4 5 l-4 -5z" fill="#e8eef8" stroke="#5a6e94"/></svg>
<svg class="abs" style="left:603px;top:890px" width="10" height="12" viewBox="0 0 10 12"><g fill="#4a628e"><rect x="7" y="1" width="2" height="2"/><rect x="4" y="4" width="2" height="2"/><rect x="7" y="4" width="2" height="2"/><rect x="1" y="8" width="2" height="2"/><rect x="4" y="8" width="2" height="2"/><rect x="7" y="8" width="2" height="2"/></g></svg>
<div class="abs" id="wframe"></div>
</div></div>
</body></html>
